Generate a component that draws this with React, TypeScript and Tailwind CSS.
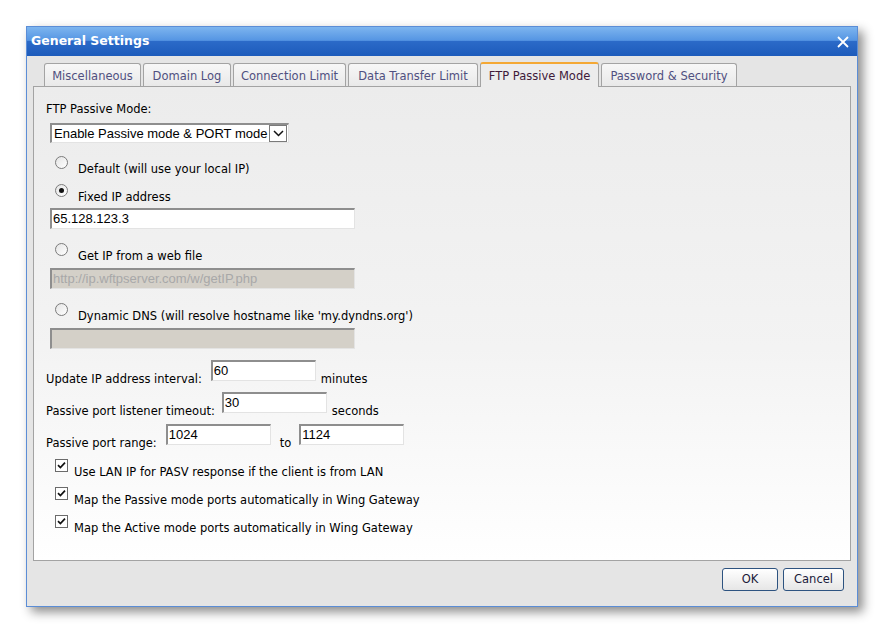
import React from "react";

const tabs = [
  { label: "Miscellaneous", w: 97 },
  { label: "Domain Log", w: 88 },
  { label: "Connection Limit", w: 113 },
  { label: "Data Transfer Limit", w: 130 },
  { label: "FTP Passive Mode", w: 119, active: true },
  { label: "Password & Security", w: 136 },
];

const font = "font-['DejaVu_Sans',Verdana,sans-serif]";
const inputFont = "font-['Liberation_Sans',Arial,sans-serif]";

const Radio = ({ checked = false }: { checked?: boolean }) => (
  <span className="w-[13px] h-[13px] rounded-full border border-[#7b7b7b] bg-[linear-gradient(135deg,#e4e4e4,#ffffff)] flex items-center justify-center shrink-0">
    {checked && <span className="w-[5px] h-[5px] rounded-full bg-[#111]" />}
  </span>
);

const Check = () => (
  <span className="w-[13px] h-[13px] border border-[#6b6b6b] bg-white flex items-center justify-center shrink-0">
    <svg width="9" height="9" viewBox="0 0 9 9">
      <path d="M1 4.2 L3.4 6.6 L8 1.6" fill="none" stroke="#111" strokeWidth="1.7" />
    </svg>
  </span>
);

const TextInput = ({ value, w, disabled = false }: { value: string; w: string; disabled?: boolean }) => (
  <div
    className={`${w} h-[21px] border-t-2 border-l-2 border-[#8e8e8e] border-b border-r border-b-[#e3e3e3] border-r-[#e3e3e3] ${
      disabled ? "bg-[#d4d0c8] text-[#a8a8a8]" : "bg-white text-black"
    } ${inputFont} text-[13px] leading-[17px] pl-[1px] overflow-hidden whitespace-nowrap`}
  >
    {value}
  </div>
);

export default function App() {
  return (
    <div className={`w-[884px] h-[634px] bg-white pt-[26px] pl-[26px] ${font}`}>
      <div className="w-[832px] h-[581px] border border-[#5b8dd6] bg-[#e5e5e5] shadow-[5px_5px_10px_rgba(0,0,0,0.45)] flex flex-col">
        {/* title bar */}
        <div className="h-[29px] bg-[linear-gradient(to_bottom,#7db5ef_0%,#5595e3_46%,#2b6ac8_50%,#1d5bbb_100%)] flex items-center justify-between pl-[4px] pr-[8px]">
          <span className="text-white font-bold text-[12.5px]">General Settings</span>
          <svg width="12" height="12" viewBox="0 0 12 12">
            <path d="M1 1 L11 11 M11 1 L1 11" stroke="#fff" strokeWidth="1.8" />
          </svg>
        </div>

        {/* tabs */}
        <div className="flex items-end pl-[17px] gap-[2px] h-[30px]">
          {tabs.map((t) =>
            t.active ? (
              <div
                key={t.label}
                style={{ width: t.w }}
                className="h-[25px] -mb-px pt-[2px] relative z-10 border border-[#a3a3a3] border-b-0 border-t-2 border-t-[#f4a834] rounded-t-[3px] bg-[#ececec] text-[#401a3a] text-[11.5px] flex items-center justify-center"
              >
                {t.label}
              </div>
            ) : (
              <div
                key={t.label}
                style={{ width: t.w }}
                className="h-[23px] pt-[3px] border border-[#a3a3a3] border-b-0 rounded-t-[3px] bg-[linear-gradient(to_bottom,#f7f7f7,#e9e9e9)] text-[#505080] text-[11.5px] flex items-center justify-center"
              >
                {t.label}
              </div>
            )
          )}
        </div>

        {/* panel */}
        <div className="mx-[6px] h-[475px] border border-[#a3a3a3] bg-[linear-gradient(to_bottom,#ececec_0%,#f3f3f3_55%,#ffffff_100%)] pl-[12px] pt-[15px] text-[11.5px] text-black">
          <div className="leading-[14px]">FTP Passive Mode:</div>
          <div className="mt-[7px] ml-[4px] w-[239px] h-[20px] border-t-2 border-l-2 border-[#8e8e8e] border-b border-r border-b-[#e3e3e3] border-r-[#e3e3e3] bg-white flex items-center">
            <span className={`${inputFont} text-[13px] pl-[2px] flex-1 whitespace-nowrap overflow-hidden`}>
              Enable Passive mode &amp; PORT mode
            </span>
            <span className="w-[18px] h-[17px] border border-[#7a7a7a] bg-white flex items-center justify-center mr-px">
              <svg width="11" height="7" viewBox="0 0 11 7">
                <path d="M1 1 L5.5 5.5 L10 1" fill="none" stroke="#111" strokeWidth="1.5" />
              </svg>
            </span>
          </div>

          <div className="flex items-start mt-[13px] ml-[9px]">
            <Radio />
            <span className="ml-[10px] mt-[6px] leading-[14px]">Default (will use your local IP)</span>
          </div>
          <div className="flex items-start mt-[8px] ml-[9px]">
            <Radio checked />
            <span className="ml-[10px] mt-[6px] leading-[14px]">Fixed IP address</span>
          </div>
          <div className="mt-[4px] ml-[4px]">
            <TextInput value="65.128.123.3" w="w-[305px]" />
          </div>

          <div className="flex items-start mt-[14px] ml-[9px]">
            <Radio />
            <span className="ml-[10px] mt-[6px] leading-[14px]">Get IP from a web file</span>
          </div>
          <div className="mt-[5px] ml-[4px]">
            <TextInput value="http://ip.wftpserver.com/w/getIP.php" w="w-[305px]" disabled />
          </div>

          <div className="flex items-start mt-[14px] ml-[9px]">
            <Radio />
            <span className="ml-[10px] mt-[6px] leading-[14px]">Dynamic DNS (will resolve hostname like 'my.dyndns.org')</span>
          </div>
          <div className="mt-[5px] ml-[4px]">
            <TextInput value="" w="w-[305px]" disabled />
          </div>

          <div className="flex items-end mt-[11px]">
            <span className="leading-[14px] mb-[-5px]">Update IP address interval:</span>
            <span className="ml-[9px]"><TextInput value="60" w="w-[105px]" /></span>
            <span className="ml-[5px] leading-[14px] mb-[-5px]">minutes</span>
          </div>
          <div className="flex items-end mt-[11px]">
            <span className="leading-[14px] mb-[-5px]">Passive port listener timeout:</span>
            <span className="ml-[7px]"><TextInput value="30" w="w-[105px]" /></span>
            <span className="ml-[5px] leading-[14px] mb-[-5px]">seconds</span>
          </div>
          <div className="flex items-end mt-[11px]">
            <span className="leading-[14px] mb-[-5px]">Passive port range:</span>
            <span className="ml-[9px]"><TextInput value="1024" w="w-[105px]" /></span>
            <span className="ml-[9px] leading-[14px] mb-[-5px]">to</span>
            <span className="ml-[8px]"><TextInput value="1124" w="w-[105px]" /></span>
          </div>

          <div className="flex flex-col gap-[15px] mt-[14px] ml-[9px]">
            {[
              "Use LAN IP for PASV response if the client is from LAN",
              "Map the Passive mode ports automatically in Wing Gateway",
              "Map the Active mode ports automatically in Wing Gateway",
            ].map((l) => (
              <div key={l} className="flex items-start h-[13px]">
                <Check />
                <span className="ml-[6px] mt-[6px] leading-[14px]">{l}</span>
              </div>
            ))}
          </div>
        </div>

        {/* buttons */}
        <div className="flex justify-end gap-[5px] pr-[13px] pt-[7px]">
          <button className="w-[56px] h-[23px] border border-[#2d5380] rounded-[3px] bg-[linear-gradient(to_bottom,#ffffff,#e6e6e6)] text-[11.5px] text-[#1a1a3a]">
            OK
          </button>
          <button className="w-[61px] h-[23px] border border-[#2d5380] rounded-[3px] bg-[linear-gradient(to_bottom,#ffffff,#e6e6e6)] text-[11.5px] text-[#1a1a3a]">
            Cancel
          </button>
        </div>
      </div>
    </div>
  );
}
